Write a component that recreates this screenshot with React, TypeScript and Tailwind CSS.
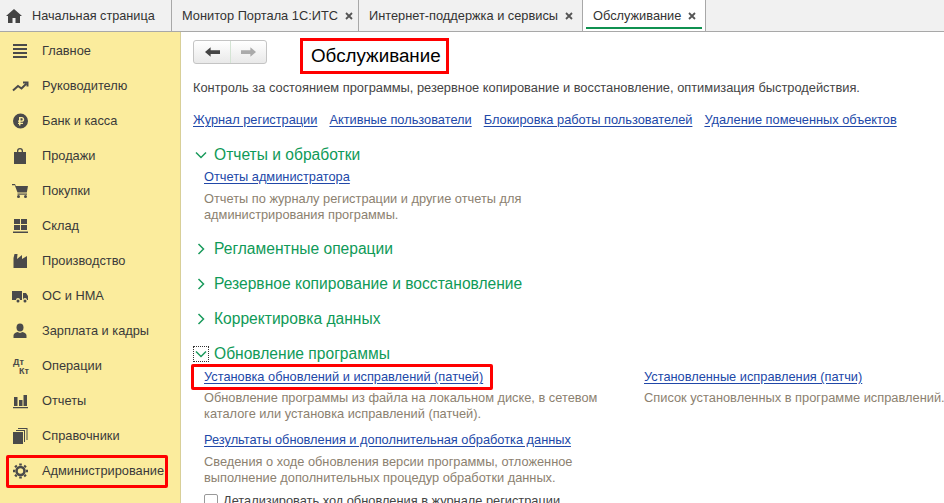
import type { ReactNode } from 'react';

const gearTeeth = [0, 45, 90, 135, 180, 225, 270, 315];

const menu: { label: string; icon: ReactNode }[] = [
  { label: 'Главное', icon: <path d="M0 1h14v2H0zM0 5h14v2H0zM0 9h14v2H0zM0 13h14v2H0z" /> },
  { label: 'Руководителю', icon: <g fill="none" stroke="#4a4a4a" strokeWidth="2"><path d="M0 12.500l5-4.500 3.500 2.500 5-5" /><path d="M10 4.500h4.500v4" /></g> },
  { label: 'Банк и касса', icon: <path fillRule="evenodd" d="M7.500 .500a7.500 7.500 0 1 1 0 15 7.500 7.500 0 0 1 0-15zM6 4v3.500H5v1.300h1v1H5V11h1v1.500h1.500V11H10V9.800H7.500v-1h1.300c1.400 0 2.400-1 2.400-2.400S10.200 4 8.800 4zm1.500 1.300h1.200c.6 0 1 .5 1 1.100s-.4 1.100-1 1.100H7.500z" /> },
  { label: 'Продажи', icon: <path fillRule="evenodd" d="M1 4h3V3a3 3 0 0 1 6 0v1h3v12H1zM5.300 4h3.400V3a1.700 1.700 0 0 0-3.400 0z" /> },
  { label: 'Покупки', icon: <><path d="M-1 1h3l.8 2H15l-1.200 6.500H4.500L1.800 2.300H-1z" /><path d="M4.500 10.500h9.500v1.200H4.500z" /><circle cx="5.500" cy="13.500" r="1.500" /><circle cx="12.500" cy="13.500" r="1.500" /></> },
  { label: 'Склад', icon: <path d="M1 1h6v5H1zM8 1h6v5H8zM1 7h6v5H1zM8 7h6v5H8zM0 13.500h15V15H0z" /> },
  { label: 'Производство', icon: <path d="M.500 15V5l1-4h3L4 6l5-4v4l5-3v12z" /> },
  { label: 'ОС и НМА', icon: <><path d="M-1 3h10v9H7a2 2 0 0 0-4 0H-1z" /><path d="M10 5h3l2 3v4h-1a2 2 0 0 0-4 0z" /><circle cx="5" cy="13" r="1.500" /><circle cx="12" cy="13" r="1.500" /></> },
  { label: 'Зарплата и кадры', icon: <><ellipse cx="7" cy="4.500" rx="3.500" ry="4" /><path d="M.500 15v-2.500C.500 10.500 2.500 9.500 4.500 9L7 10l2.500-1c2 .5 4 1.500 4 3.500V15z" /></> },
  { label: 'Операции', icon: <><text x="0" y="7" fontSize="9" fontWeight="700" fontFamily="Liberation Sans, sans-serif">Дт</text><text x="6" y="15.500" fontSize="9" fontWeight="700" fontFamily="Liberation Sans, sans-serif">Кт</text></> },
  { label: 'Отчеты', icon: <path d="M1 4h3.500v9H1zM6 7h3.500v6H6zM10.500 2h3.500v11h-3.500zM0 14h15v1.300H0z" /> },
  { label: 'Справочники', icon: <><path d="M0 4h10v12H0z" /><path d="M11 3v11h1V2H3v1zM13.500 1v11h1V0H5v1z" /></> },
  { label: 'Администрирование', icon: <g fill="none" stroke="#4a4a4a"><circle cx="7.500" cy="8" r="4" strokeWidth="2.600" />{gearTeeth.map((a) => <path key={a} d="M7.500 2.500V.500" strokeWidth="2.600" transform={`rotate(${a} 7.500 8)`} />)}</g> },
];

function Tab({ label, active, width }: { label: string; active?: boolean; width: string }) {
  return (
    <div className={`relative h-[31px] flex items-center pl-[10px] border-r border-[#a8a8a8] ${width} ${active ? 'bg-white' : ''}`}>
      <span className="text-[#333] whitespace-nowrap">{label}</span>
      <svg viewBox="0 0 8 8" className="w-[8px] h-[8px] ml-[7px] stroke-[#555] shrink-0" strokeWidth="1.800">
        <path d="M1 1l6 6M7 1L1 7" />
      </svg>
      {active && <div className="absolute left-[3px] right-[3px] bottom-[2px] h-[2px] bg-[#0f9150]" />}
    </div>
  );
}

function Chevron({ open }: { open?: boolean }) {
  return (
    <svg viewBox="0 0 12 12" className="w-[12px] h-[12px] fill-none stroke-[#1a9a5c]" strokeWidth="1.500">
      {open ? <path d="M1 3.500l5 5 5-5" /> : <path d="M3.500 1l5 5-5 5" />}
    </svg>
  );
}

function Section({ label, open, focused, className }: { label: string; open?: boolean; focused?: boolean; className: string }) {
  return (
    <div className={`flex items-center h-[20px] ${className}`}>
      <div className={`w-[16px] h-[16px] flex items-center justify-center mr-[5px] ${focused ? 'border border-dotted border-[#333]' : ''}`}>
        <Chevron open={open} />
      </div>
      <span className="text-[15.6px] text-[#0f9a58] whitespace-nowrap">{label}</span>
    </div>
  );
}

function LinkText({ children, className = '' }: { children: ReactNode; className?: string }) {
  return <a className={`text-[#2148a8] underline underline-offset-2 whitespace-nowrap ${className}`}>{children}</a>;
}

export default function App() {
  return (
    <div className="w-[944px] h-[503px] overflow-hidden bg-white flex flex-col text-[12.8px] leading-[16px]" style={{ fontFamily: '"Liberation Sans", Arial, sans-serif' }}>
      <div className="h-[32px] shrink-0 flex bg-[#f1f1f1] border-b border-[#a8a8a8]">
        <div className="w-[172px] h-[31px] flex items-center pl-[6px] border-r border-[#a8a8a8]">
          <svg viewBox="0 0 16 14" className="w-[16px] h-[14px] fill-[#444] mr-[10px]">
            <path d="M8 0l8 7h-2v7H9.500V9h-3v5H2V7H0z" />
          </svg>
          <span className="text-[12.7px] text-[#333] whitespace-nowrap">Начальная страница</span>
        </div>
        <Tab label="Монитор Портала 1С:ИТС" width="w-[187px]" />
        <Tab label="Интернет-поддержка и сервисы" width="w-[224px]" />
        <Tab label="Обслуживание" active width="w-[123px]" />
      </div>

      <div className="flex-1 flex min-h-0">
        <div className="w-[181px] shrink-0 bg-[#fbec9d] border-r border-[#d8cf98] pt-[1px]">
          {menu.map((m) => (
            <div key={m.label} className="relative h-[35px] flex items-center pl-[13px]">
              <svg viewBox="0 0 16 16" className="w-[16px] h-[16px] fill-[#4a4a4a] shrink-0 mr-[13px] overflow-visible">{m.icon}</svg>
              <span className="text-[#3a3a3a] whitespace-nowrap">{m.label}</span>
              {m.label === 'Администрирование' && (
                <div className="absolute left-[6px] top-[2px] w-[162px] h-[33px] border-[3px] border-[#f00] rounded-[2px]" />
              )}
            </div>
          ))}
        </div>

        <div className="flex-1 pl-[12px] min-w-0">
          <div className="flex items-start h-[44px] pt-[6px]">
            <div className="mt-[2px] w-[74px] h-[24px] flex rounded-[3px] border border-[#c4c4c4] bg-gradient-to-b from-white to-[#e9e9e9]">
              <div className="w-[37px] flex items-center justify-center border-r border-[#d4e4d4]">
                <svg viewBox="0 0 16 10" className="w-[15px] h-[10px] fill-[#444]"><path d="M0 5l6-5v3h10v4H6v3z" /></svg>
              </div>
              <div className="flex-1 flex items-center justify-center">
                <svg viewBox="0 0 16 10" className="w-[15px] h-[10px] fill-[#aaa]"><path d="M16 5l-6-5v3H0v4h10v3z" /></svg>
              </div>
            </div>
            <div className="ml-[33px] w-[149px] h-[36px] border-[3px] border-[#f00] flex items-center pl-[8px] text-[18.8px] text-black whitespace-nowrap">Обслуживание</div>
          </div>

          <div className="mt-[4px] text-[#444] text-[12.85px] whitespace-nowrap">Контроль за состоянием программы, резервное копирование и восстановление, оптимизация быстродействия.</div>

          <div className="mt-[16px] flex gap-[12px]">
            <LinkText>Журнал регистрации</LinkText>
            <LinkText>Активные пользователи</LinkText>
            <LinkText>Блокировка работы пользователей</LinkText>
            <LinkText>Удаление помеченных объектов</LinkText>
          </div>

          <Section open label="Отчеты и обработки" className="mt-[17px]" />
          <div className="mt-[4px] pl-[11px]"><LinkText>Отчеты администратора</LinkText></div>
          <div className="mt-[6px] pl-[11px] text-[#8c8170]">
            Отчеты по журналу регистрации и другие отчеты для<br />администрирования программы.
          </div>

          <Section label="Регламентные операции" className="mt-[16px]" />
          <Section label="Резервное копирование и восстановление" className="mt-[15px]" />
          <Section label="Корректировка данных" className="mt-[15px]" />
          <Section open focused label="Обновление программы" className="mt-[15px]" />

          <div className="flex mt-[5px]">
            <div className="w-[451px] shrink-0 pl-[11px]">
              <div className="relative">
                <LinkText>Установка обновлений и исправлений (патчей)</LinkText>
                <div className="absolute left-[-13px] top-[-5px] w-[302px] h-[26px] border-[3px] border-[#f00] rounded-[2px]" />
              </div>
              <div className="mt-[5px] text-[#8c8170]">
                Обновление программы из файла на локальном диске, в сетевом<br />каталоге или установка исправлений (патчей).
              </div>
              <div className="mt-[10px]"><LinkText>Результаты обновления и дополнительная обработка данных</LinkText></div>
              <div className="mt-[6px] text-[#8c8170]">
                Сведения о ходе обновления версии программы, отложенное<br />выполнение дополнительных процедур обработки данных.
              </div>
              <div className="mt-[7px] flex items-center">
                <div className="w-[14px] h-[14px] border border-[#999] rounded-[2px] mr-[5px]" />
                <span className="text-[#444] whitespace-nowrap">Детализировать ход обновления в журнале регистрации</span>
              </div>
            </div>
            <div className="min-w-0">
              <LinkText>Установленные исправления (патчи)</LinkText>
              <div className="mt-[5px] text-[#8c8170] text-[12.85px] whitespace-nowrap">Список установленных в программе исправлений.</div>
            </div>
          </div>
        </div>
      </div>
    </div>
  );
}
